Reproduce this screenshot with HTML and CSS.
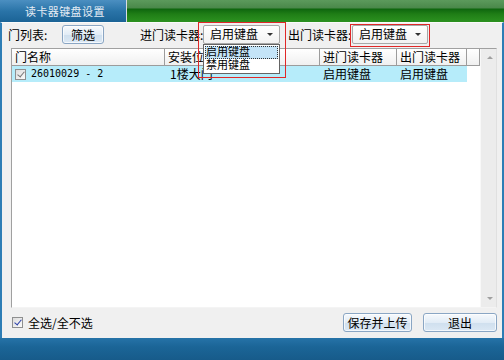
FILE: index.html
```html
<!DOCTYPE html>
<html lang="zh-CN">
<head>
    <meta charset="UTF-8">
    <title>读卡器键盘设置</title>
    <link rel="stylesheet" href="styles.css">
</head>
<body>
    <div class="window">
        <div class="titlebar">
            <div class="tab">读卡器键盘设置</div>
            <div class="tab-sep"></div>
            <div class="title-fill"></div>
        </div>

        <div class="panel">
            <div class="toolbar">
                <span class="label label-door">门列表:</span>
                <button class="btn btn-filter">筛选</button>
                <span class="label label-in">进门读卡器:</span>
                <div class="combo combo-in">启用键盘<span class="arrow"></span></div>
                <span class="label label-out">出门读卡器:</span>
                <div class="combo combo-out">启用键盘<span class="arrow"></span></div>
            </div>

            <div class="list">
                <div class="list-body">
                    <div class="row head">
                        <div class="cell c1">门名称</div>
                        <div class="cell c2">安装位置</div>
                        <div class="cell c3">进门读卡器</div>
                        <div class="cell c4">出门读卡器</div>
                        <div class="cell c5"></div>
                    </div>
                    <div class="row item selected">
                        <div class="cell c1"><span class="check grey"></span><span class="mono">26010029 - 2</span></div>
                        <div class="cell c2">1楼大门</div>
                        <div class="cell c3">启用键盘</div>
                        <div class="cell c4">启用键盘</div>
                    </div>
                </div>
                <div class="scrollbar">
                    <span class="sb-up"></span>
                    <span class="sb-down"></span>
                </div>
            </div>

            <div class="bottom">
                <label class="select-all"><span class="check blue"></span>全选/全不选</label>
                <button class="btn btn-save">保存并上传</button>
                <button class="btn btn-exit">退出</button>
            </div>

            <!-- 下拉列表和红框标注 -->
            <div class="dropdown">
                <div class="option active">启用键盘</div>
                <div class="option">禁用键盘</div>
            </div>
            <div class="mark mark-in"></div>
            <div class="mark mark-out"></div>
        </div>

        <div class="footer"></div>
    </div>
</body>
</html>
```

FILE: styles.css
```css
body {
    margin: 0;
    padding: 0;
    font-family: "Noto Sans CJK SC", "Liberation Sans", sans-serif;
    font-size: 12px;
    color: #000;
}
.window {
    width: 504px;
    height: 360px;
    display: flex;
    flex-direction: column;
    overflow: hidden;
}
.titlebar {
    height: 22px;
    display: flex;
}
.tab {
    width: 126px;
    background: linear-gradient(#4b8fc1, #2a74a8 50%, #1b6396);
    color: #e4ecf4;
    font-size: 11px;
    line-height: 22px;
    padding-left: 25px;
    box-sizing: border-box;
    letter-spacing: 0.4px;
}
.tab-sep {
    width: 1px;
    background: #d8dde2;
}
.title-fill {
    flex: 1;
    background: linear-gradient(#5c9a5c, #4a884a 8px, #0e660e 9px, #1f7d16 14px, #2c9120);
}
.panel {
    flex: 1;
    position: relative;
    background: #f0f0f0;
    border-left: 2px solid #2d7db5;
    border-right: 2px solid #2d7db5;
    border-top: 1px solid #fafafa;
    display: flex;
    flex-direction: column;
}
.toolbar {
    display: flex;
    align-items: center;
    height: 19px;
    margin-top: 2px;
    padding-left: 6px;
}
.label {
    white-space: nowrap;
}
.label-door { width: 54px; }
.label-in { width: 63px; margin-left: 36px; }
.label-out { width: 64px; margin-left: 8px; }
.btn {
    font-family: inherit;
    font-size: 12px;
    color: #000;
    padding: 0;
    border: 1px solid #8aa6c4;
    border-radius: 3px;
    background: linear-gradient(#f6f9fc, #e2ecf6 50%, #cfdfee 51%, #dbe8f4);
    box-shadow: inset 0 0 0 1px rgba(255, 255, 255, 0.7);
    height: 19px;
    line-height: 15px;
}
.btn-filter { width: 42px; }
.combo {
    position: relative;
    height: 19px;
    box-sizing: border-box;
    border: 1px solid #a8a8a8;
    border-radius: 2px;
    background: linear-gradient(#ffffff, #f2f2f2);
    line-height: 16px;
    padding-left: 6px;
}
.combo-in { width: 77px; }
.combo-out { width: 76px; margin-left: 0; }
.arrow {
    position: absolute;
    right: 6px;
    top: 7px;
    border-left: 3px solid transparent;
    border-right: 3px solid transparent;
    border-top: 3px solid #333;
}
.list {
    margin: 4px 0 0 9px;
    width: 486px;
    height: 260px;
    box-sizing: border-box;
    border: 1px solid #a0a0a0;
    border-right-color: #e0e0e0;
    border-bottom-color: #f4f4f4;
    background: #fff;
    display: flex;
}
.list-body {
    flex: 1;
}
.row {
    display: flex;
    height: 16px;
    line-height: 16px;
}
.row.head {
    height: 17px;
    line-height: 16px;
}
.head .cell {
    box-sizing: border-box;
    border-right: 1px solid #9c9c9c;
    border-bottom: 1px solid #9c9c9c;
    background: linear-gradient(#ffffff, #f0f0f0);
    padding-left: 3px;
}
.cell {
    white-space: nowrap;
    overflow: hidden;
}
.c1 { width: 153px; }
.c2 { width: 155px; }
.c3 { width: 77px; }
.c4 { width: 70px; }
.c5 { width: 13px; }
.item {
    width: 455px;
}
.item .cell {
    padding-left: 3px;
    box-sizing: border-box;
}
.item .c1 {
    display: flex;
    align-items: center;
}
.selected {
    background: #b6ecfa;
}
.item .c2 { padding-left: 5px; }
.mono {
    font-family: "DejaVu Sans Mono", monospace;
    font-size: 10px;
    margin-left: 5px;
}
.check {
    display: inline-block;
    position: relative;
    width: 11px;
    height: 11px;
    box-sizing: border-box;
    border: 1px solid #8e8f8f;
    background: linear-gradient(135deg, #dcdcdc, #fbfbfb);
}
.check::after {
    content: "";
    position: absolute;
    left: 3px;
    top: 0px;
    width: 3px;
    height: 6px;
    border-right: 1.5px solid #777;
    border-bottom: 1.5px solid #777;
    transform: rotate(40deg);
}
.check.blue::after {
    border-color: #2a3fa8;
}
.scrollbar {
    width: 17px;
    position: relative;
    background: #ececec;
    border-left: 1px solid #f8f8f8;
}
.sb-up, .sb-down {
    position: absolute;
    left: 6px;
    border-left: 3px solid transparent;
    border-right: 3px solid transparent;
}
.sb-up {
    top: 7px;
    border-bottom: 3px solid #a0a0a0;
}
.sb-down {
    bottom: 7px;
    border-top: 3px solid #a0a0a0;
}
.bottom {
    display: flex;
    align-items: center;
    height: 29px;
    padding-left: 10px;
}
.select-all {
    display: flex;
    align-items: center;
    gap: 5px;
    margin-right: auto;
}
.btn-save { width: 69px; }
.btn-exit { width: 74px; margin-left: 11px; margin-right: 5px; }
.dropdown {
    position: absolute;
    left: 201px;
    top: 21px;
    width: 77px;
    height: 30px;
    box-sizing: border-box;
    border: 1px solid #646464;
    background: #fff;
    padding: 1px;
}
.option {
    height: 13px;
    line-height: 13px;
    font-family: "Liberation Sans", "Noto Sans CJK SC", sans-serif;
    font-size: 11px;
    padding-left: 1px;
}
.option.active {
    background: #c4e4f8;
    outline: 1px dotted #333;
    outline-offset: -1px;
}
.mark {
    position: absolute;
    border: 1px solid #e02828;
}
.mark-in {
    left: 196px;
    top: -1px;
    width: 86px;
    height: 54px;
}
.mark-out {
    left: 348px;
    top: 1px;
    width: 78px;
    height: 21px;
}
.footer {
    height: 22px;
    background: linear-gradient(#2673a8, #1b6597 40%, #175b8a);
}
```
